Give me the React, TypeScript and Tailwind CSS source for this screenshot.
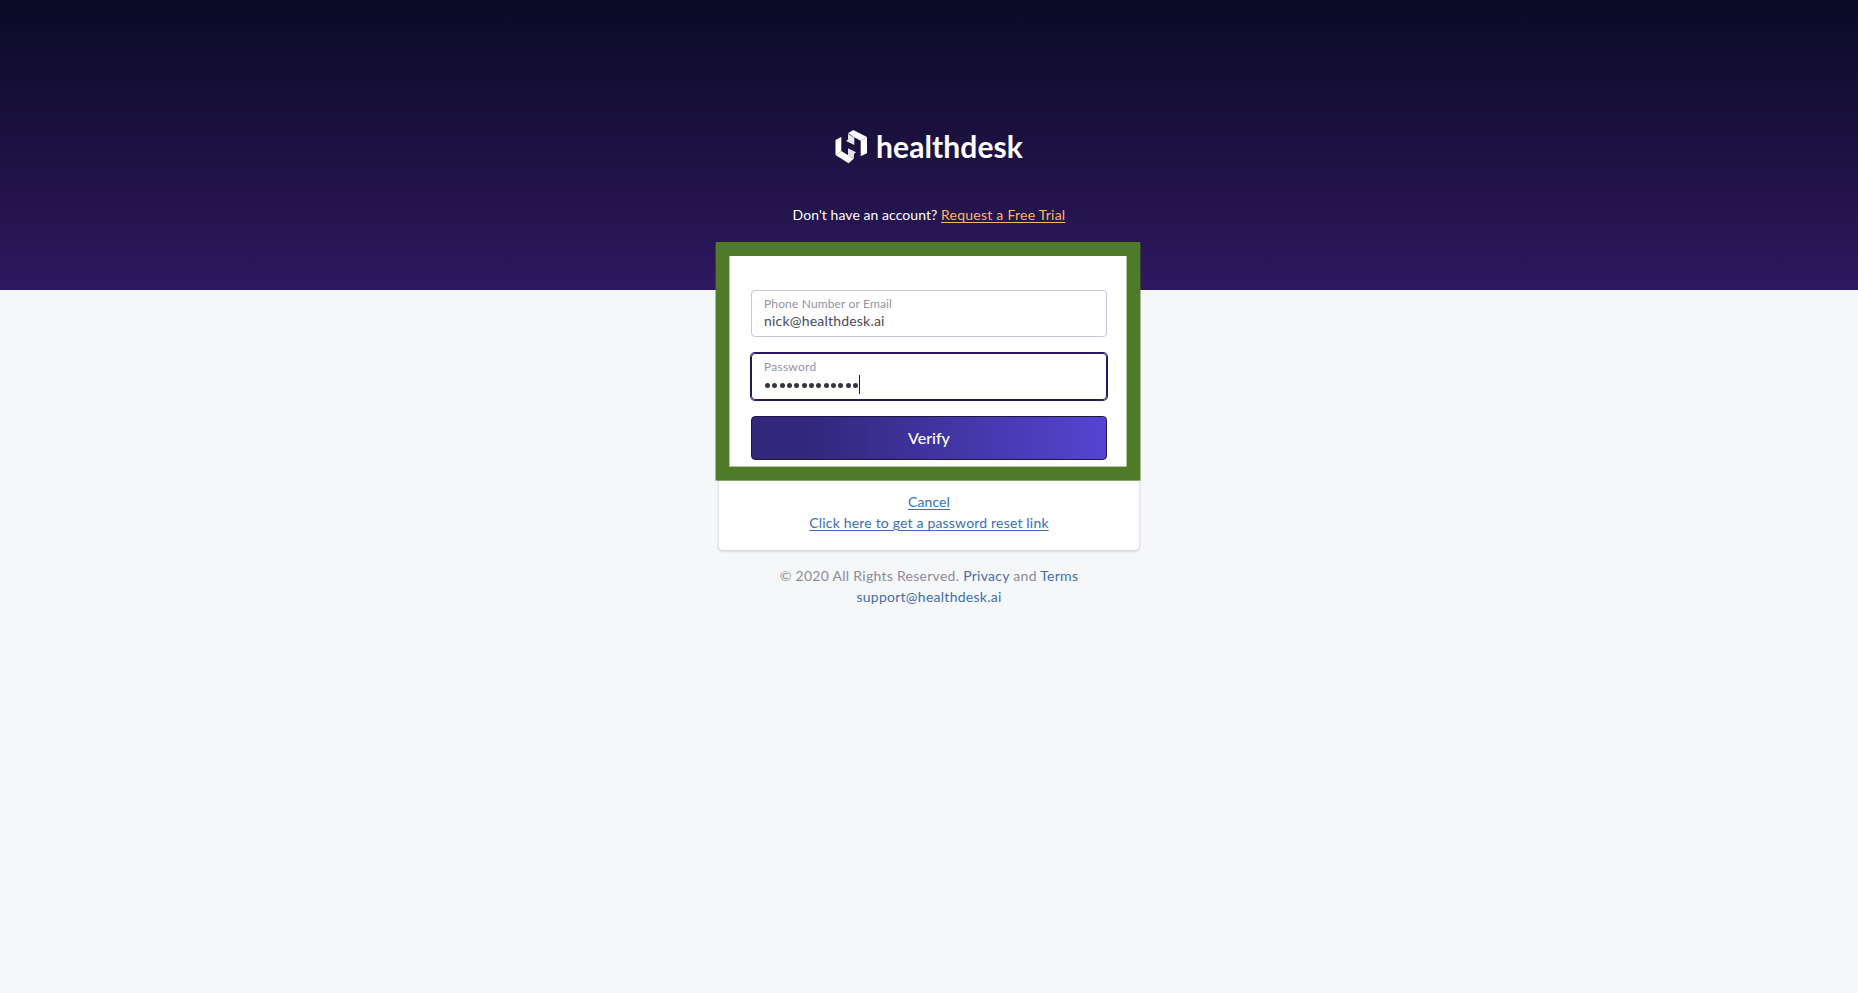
const Logo = () => (
  <div className="flex items-center justify-center h-[34px] text-white">
    <svg width="32" height="34" viewBox="0 0 32 34" fill="none">
      <path d="M0.5 10L6.3 7V21L0.5 25Z" fill="#fff" />
      <path d="M0.5 25L6.3 21L18.8 28.7L13.5 33.3Z" fill="#fff" />
      <path d="M13 18.3L21 22.3L19 24V28.5L13 25.5Z" fill="#e4e4ea" />
      <path d="M13 4L19.3 7.5V15L11 11L13 9.5Z" fill="#e4e4ea" />
      <path d="M13 3.3L18.3 0L32 7L25.7 10.7L19.3 7.2Z" fill="#fff" />
      <path d="M25.7 10.7L32 7V23.3L25.7 26.3Z" fill="#fff" />
    </svg>
    <span className="ml-[9px] w-[147px] pb-0.5 text-[30px] font-bold leading-[34px] tracking-[0.1px]">healthdesk</span>
  </div>
);

const links = [
  { title: "Cancel", tracking: "tracking-[0.1px]" },
  { title: "Click here to get a password reset link", tracking: "tracking-[0.18px]" },
];

const App = () => {
  return (
    <div className="min-h-screen bg-[#f6f7f9] font-['Lato','Noto_Sans',sans-serif] text-sm">
      <header className="h-[290px] bg-gradient-to-b from-[#0b0a26] to-[#2e185f] pt-[130px]">
        <Logo />
        <p className="mt-10 text-center leading-[21px] text-white whitespace-nowrap">
          <span className="tracking-[0.06px]">Don't have an account?</span>{" "}
          <a href="#" className="text-[#f6b962] underline underline-offset-2 tracking-[0.25px]">Request a Free Trial</a>
        </p>
      </header>

      <main className="relative mx-auto -mt-12 w-[420px] h-[308px] rounded-b bg-white px-8 pt-12 shadow-[0_1px_3px_rgba(40,40,60,0.25)]">
        {/* highlight around the sign in form */}
        <div className="absolute -left-[3px] top-0 h-[238px] w-[424px] border-[13px] border-t-[14px] border-[#4f7b28] shadow-[1px_1px_0_#4f7b2870,-1px_1px_0_#4f7b2870,inset_1px_-1px_0_#4f7b2870,inset_-1px_0_0_#4f7b2870] pointer-events-none" />
        <form>
          <div className="h-[47px] rounded border border-[#c7c5d6] px-3 pt-[5px]">
            <div className="text-xs leading-4 text-[#9392a5] tracking-[0.15px]">Phone Number or Email</div>
            <div className="-mt-px text-sm leading-[19px] text-[#4b4858] tracking-[0.2px]">nick@healthdesk.ai</div>
          </div>
          <div className="mt-4 h-[47px] rounded border border-[#2b155f] px-3 pt-[5px] ring-1 ring-[#2b155f]">
            <div className="text-xs leading-4 text-[#9392a5] tracking-[0.25px]">Password</div>
            <div className="flex h-[19px] items-center">
              <div className="flex gap-[2.33px] pt-px pl-[1px]">
                {Array.from({ length: 13 }).map((_, index) => (
                  <span key={index} className="h-[5px] w-[5px] rounded-full bg-[#353344]" />
                ))}
              </div>
              <span className="ml-[1px] h-[19px] w-px bg-[#222]" />
            </div>
          </div>
          <button
            type="button"
            className="mt-4 block h-[44px] w-full rounded border border-[#1f1547] bg-gradient-to-r from-[#32277b] from-15% to-[#5445d1] text-base font-medium text-white"
          >
            Verify
          </button>
        </form>
        <div className="mt-[31px] text-center leading-[21px]">
          {links.map((link) => (
            <div key={link.title}>
              <a href="#" className={`text-[#3a6fb5] underline underline-offset-2 ${link.tracking}`}>{link.title}</a>
            </div>
          ))}
        </div>
      </main>

      <footer className="mt-[15px] text-center leading-[21px] text-[#8c8b9c]">
        <div className="tracking-[0.28px]">
          © 2020 All Rights Reserved. <a href="#" className="text-[#3f6eae]">Privacy</a> and{" "}
          <a href="#" className="text-[#3f6eae]">Terms</a>
        </div>
        <a href="#" className="text-[#3f6eae] tracking-[0.26px]">support@healthdesk.ai</a>
      </footer>
    </div>
  );
};

export default App;
